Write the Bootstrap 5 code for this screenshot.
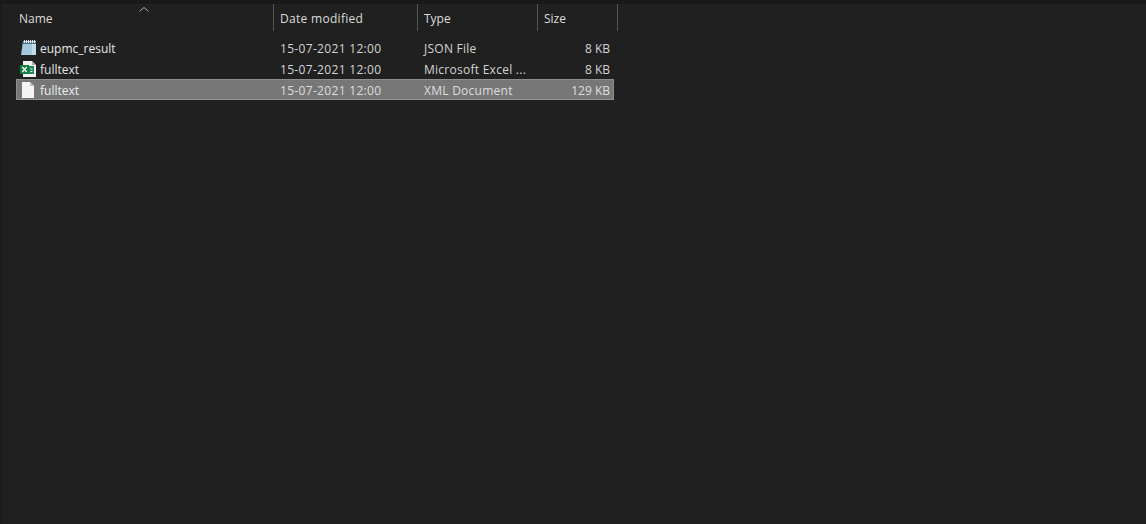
<!DOCTYPE html>
<html lang="en"><head><meta charset="utf-8"><title>Explorer</title>
<link href="https://cdn.jsdelivr.net/npm/bootstrap@5.3.0/dist/css/bootstrap.min.css" rel="stylesheet">
<style>
html,body{height:100%;}
body{background:#202020;color:#e6e6e6;font-family:"Open Sans","Noto Sans",sans-serif;font-size:12px;overflow:hidden;}
.topstrip{height:4px;background:#191919;}
.frame{border-left:2px solid #1b1b1b;height:520px;}
.headrow{height:27px;color:#dcdcdc;}
.hc{height:27px;border-right:1px solid #555;line-height:30px;white-space:nowrap;}
.hname{width:272px;padding-left:17px;}
.hdate{width:144px;padding-left:6px;letter-spacing:.3px;}
.htype{width:120px;padding-left:6px;}
.hsize{width:80px;padding-left:6px;}
.caret{left:137px;top:3px;width:10px;height:5px;}
.rows{margin-top:6px;margin-left:14px;width:598px;}
.frow{height:21px;line-height:21px;border:1px solid transparent;white-space:nowrap;}
.frow.sel{background:#777;border-color:#8e8e8e;color:#eee;}
.cn{width:256px;padding-left:2px;gap:2px;}
.cn span{padding-top:2px;}
.cd{width:144px;padding-left:7px;color:#d4d4d4;letter-spacing:.32px;}
.ct{width:120px;padding-left:7px;color:#d4d4d4;letter-spacing:.26px;}
.cs{width:76px;text-align:right;padding-right:3px;color:#d4d4d4;}
.sel .cd,.sel .ct,.sel .cs{color:#ddd;}
.ico{width:19px;height:18px;flex:none;}
</style></head>
<body>
<div class="topstrip"></div>
<div class="frame position-relative">
  <svg class="caret position-absolute" viewBox="0 0 10 5"><path d="M.5 4.500 5 .5l4.500 4" fill="none" stroke="#aaa"/></svg>
  <div class="headrow d-flex">
    <div class="hc hname">Name</div>
    <div class="hc hdate">Date modified</div>
    <div class="hc htype">Type</div>
    <div class="hc hsize">Size</div>
  </div>
  <div class="rows">
    <div class="frow d-flex">
      <div class="cn d-flex align-items-center">
        <svg class="ico" viewBox="0 0 19 18"><path d="M4 2h13v14H2z" fill="#a3c9da"/><path d="M4 3h13v2H3.800z" fill="#4e7387"/><path d="M5.500 1v3M7.500 1v3M9.500 1v3M11.500 1v3M13.500 1v3M15.500 1v3" stroke="#e8e8e8"/><path d="M13 5h4v11h-4z" fill="#d7e8ef" opacity=".6"/></svg>
        <span>eupmc_result</span>
      </div>
      <div class="cd">15-07-2021 12:00</div><div class="ct">JSON File</div><div class="cs">8 KB</div>
    </div>
    <div class="frow d-flex">
      <div class="cn d-flex align-items-center">
        <svg class="ico" viewBox="0 0 19 18"><path d="M4 1h9l4 4v12H4z" fill="#f2f2f2"/><path d="M13 1v4h4z" fill="#a8a8a8"/><path d="M10 6h5v8h-5z" fill="#1f8a55"/><path d="M11.500 8.500h2v1h-2zM11.500 11h2v1h-2z" fill="#e8f4ee"/><path d="M1 5h9v9H1z" fill="#107c41"/><path d="m3.300 7 4.400 5M7.700 7l-4.400 5" stroke="#fff" stroke-width="1.300"/></svg>
        <span>fulltext</span>
      </div>
      <div class="cd">15-07-2021 12:00</div><div class="ct">Microsoft Excel ...</div><div class="cs">8 KB</div>
    </div>
    <div class="frow sel d-flex">
      <div class="cn d-flex align-items-center">
        <svg class="ico" viewBox="0 0 19 18"><path d="M3 1h8l4 4v12H3z" fill="#f4f4f4"/><path d="M11 1v4h4z" fill="#bdbdbd"/></svg>
        <span>fulltext</span>
      </div>
      <div class="cd">15-07-2021 12:00</div><div class="ct">XML Document</div><div class="cs">129 KB</div>
    </div>
  </div>
</div>
<script src="https://cdn.jsdelivr.net/npm/bootstrap@5.3.0/dist/js/bootstrap.bundle.min.js"></script>
</body></html>
